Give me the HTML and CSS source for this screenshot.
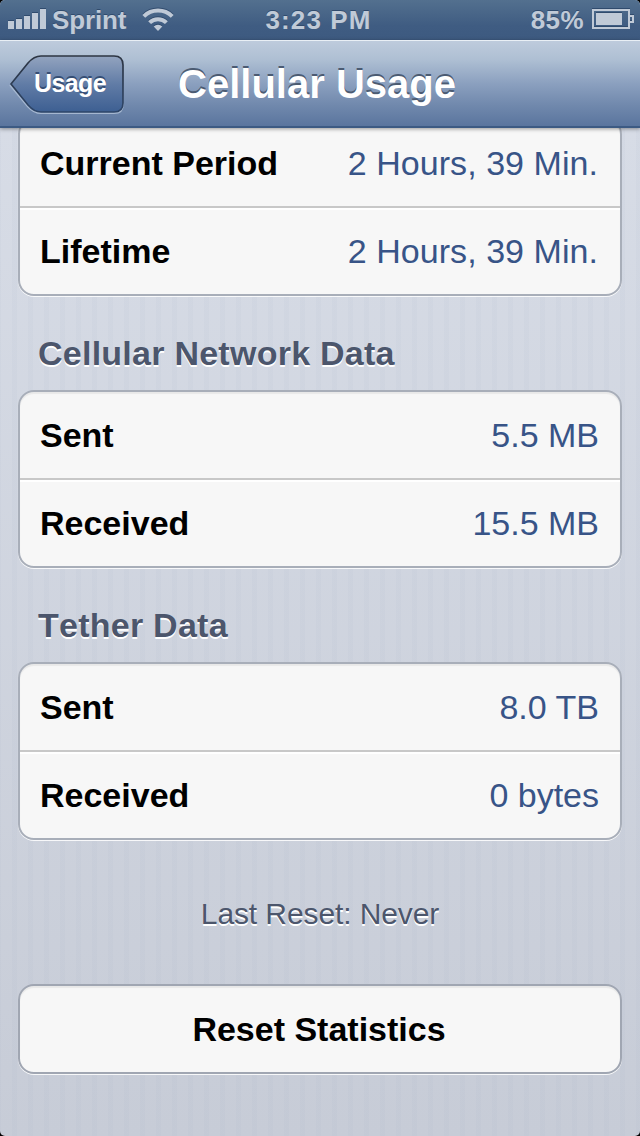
FILE: index.html
```html
<!DOCTYPE html>
<html lang="en">
<head>
<meta charset="utf-8">
<title>Cellular Usage</title>
<link rel="stylesheet" href="styles.css">
</head>
<body>
<div class="screen">
  <header class="status">
    <div class="status-left">
      <svg class="signal" width="38" height="20" viewBox="0 0 38 20"><path d="M0 12h6v8H0zM8 10h6v10H8zM16 7h6v13h-6zM24 4h6v16h-6zM32 0h6v20h-6z"/></svg>
      <span class="carrier">Sprint</span>
      <svg class="wifi" width="32" height="24" viewBox="0 0 32 24"><path d="M16 23l-4.300-4.500a6.200 6.200 0 0 1 8.600 0z"/><path class="arc" d="M7.600 14.700a11.800 11.800 0 0 1 16.800 0M1.800 8.400a20.300 20.300 0 0 1 28.400 0"/></svg>
    </div>
    <span class="time">3:23 PM</span>
    <div class="status-right">
      <span class="percent">85%</span>
      <svg class="battery" width="42" height="20" viewBox="0 0 42 20"><path class="frame" d="M1 1h36v18H1z"/><path class="frame" d="M37 7h4v6h-4"/><path d="M4 4h26v12H4z"/></svg>
    </div>
  </header>
  <nav class="nav">
    <a class="back">
      <svg class="back-shape" width="116" height="60" viewBox="0 0 116 60">
        <defs><linearGradient id="back-fill" x2="0" y2="1"><stop offset="0" stop-color="#93a4bf"/><stop offset=".5" stop-color="#617ca6"/><stop offset="1" stop-color="#3d5f92"/></linearGradient>
        <linearGradient id="back-edge" x2="0" y2="1"><stop offset="0" stop-color="#2d3542"/><stop offset="1" stop-color="#2d4568"/></linearGradient></defs>
        <path class="glow" d="M2.500 31.500L20 9.500Q26 3 33 3H106Q115 3 115 11V50Q115 59 106 59H33Q26 59 20 52.500Z"/>
        <path class="outline" d="M3 30L20 9Q26 2 33 2H106Q115 2 115 11V49Q115 58 106 58H33Q26 58 20 51Z"/>
      </svg>
      <span class="back-label">Usage</span>
    </a>
    <h1 class="title">Cellular Usage</h1>
  </nav>
  <main class="content">
    <section class="group">
      <div class="row"><span class="label">Current Period</span><span class="value duration">2 Hours, 39 Min.</span></div>
      <div class="row"><span class="label">Lifetime</span><span class="value duration">2 Hours, 39 Min.</span></div>
    </section>
    <h2 class="heading">Cellular Network Data</h2>
    <section class="group">
      <div class="row"><span class="label">Sent</span><span class="value">5.5 MB</span></div>
      <div class="row"><span class="label">Received</span><span class="value">15.5 MB</span></div>
    </section>
    <h2 class="heading">Tether Data</h2>
    <section class="group">
      <div class="row"><span class="label">Sent</span><span class="value">8.0 TB</span></div>
      <div class="row"><span class="label">Received</span><span class="value">0 bytes</span></div>
    </section>
    <p class="note">Last Reset: Never</p>
    <button class="reset">Reset Statistics</button>
  </main>
</div>
</body>
</html>
```
FILE: styles.css
```css
* { box-sizing: border-box; }
body {
  margin: 0;
  background: #000;
  font-family: "Liberation Sans", Arial, sans-serif;
}
.screen {
  display: flex;
  flex-direction: column;
  width: 640px;
  height: 1136px;
  overflow: hidden;
  border-radius: 5px;
  background:
    repeating-linear-gradient(90deg, rgba(150,165,190,.06) 0 1px, transparent 1px 12px, rgba(150,165,190,.06) 12px 16px),
    linear-gradient(#d9dee8, #c7ccd7);
}
.status {
  display: grid;
  grid-template-columns: 1fr auto 1fr;
  align-items: center;
  height: 40px;
  flex: none;
  padding: 0 6px 0 8px;
  background: linear-gradient(#53708f, #3f5c82 65%, #3d5a80);
  color: #c0cad7;
  font-size: 26px;
  font-weight: bold;
  line-height: 38px;
  text-shadow: 0 -1px 0 #304b6d;
}
.status-left, .status-right { display: flex; align-items: center; }
.status-right { justify-content: flex-end; }
.status svg { fill: #c0cad7; filter: drop-shadow(0 -1px 0 #304b6d); }
.signal { margin-top: -2px; }
.carrier { margin: 0 16px 0 6px; letter-spacing: -.15px; }
.wifi .arc { fill: none; stroke: #c0cad7; stroke-width: 4; }
.time { padding-right: 5px; letter-spacing: 1.1px; }
.percent { letter-spacing: .4px; }
.battery { margin: -2px 0 0 8px; }
.battery .frame { fill: none; stroke: #c0cad7; stroke-width: 2; }
.nav {
  display: grid;
  grid-template-columns: 116px 1fr 116px;
  align-items: center;
  height: 88px;
  flex: none;
  padding: 0 8px;
  background: linear-gradient(#becbdc, #aebfd3 22%, #8ba0bf 50%, #7189ad 75%, #5a759e);
  border-top: 1px solid #e9eff5;
  border-bottom: 2px solid #3c5a83;
  box-shadow: 0 1px 4px rgba(0,0,0,.4);
  z-index: 1;
}
.back { display: grid; align-items: center; }
.back-shape, .back-label { grid-area: 1 / 1; }
.back-shape .glow { fill: none; stroke: #a5b7d0; stroke-width: 2; }
.back-shape .outline { fill: url(#back-fill); stroke: url(#back-edge); stroke-width: 1.7; }
.back-label {
  padding: 0 0 0 26px;
  color: #fff;
  font-size: 25px;
  font-weight: bold;
  letter-spacing: -.6px;
  text-shadow: 0 -2px 0 #354e74;
}
.title {
  margin: 0;
  padding-right: 6px;
  color: #fff;
  font-size: 40px;
  line-height: 82px;
  text-align: center;
  white-space: nowrap;
  text-shadow: 0 -2px 0 #4b5b72;
}
.content { padding: 0 18px; flex: 1; min-height: 0; }
.group {
  height: 178px;
  border: 2px solid #a8aeb9;
  border-radius: 16px;
  background: #f7f7f7;
  box-shadow: 0 1px 0 rgba(255,255,255,.85), inset 0 2px 1px rgba(0,0,0,.06);
}
.group:first-child { margin-top: -10px; }
.row {
  display: flex;
  justify-content: space-between;
  height: 86px;
  padding: 0 21px 0 20px;
  font-size: 34px;
  line-height: 86px;
  white-space: nowrap;
}
.row + .row { height: 88px; border-top: 2px solid #c8c8c8; box-shadow: inset 0 2px 0 #fff; }
.label { font-weight: bold; }
.value { color: #385487; }
.duration { padding-right: 1px; letter-spacing: .05px; }
.heading {
  height: 94px;
  margin: 0;
  padding: 10px 20px 0;
  color: #4c566c;
  font-size: 34px;
  font-kerning: none;
  letter-spacing: .25px;
  line-height: 94px;
  text-shadow: 0 2px 0 #fff;
}
.note {
  height: 144px;
  margin: 0;
  padding-top: 2px;
  color: #4c566c;
  font-size: 30px;
  letter-spacing: -.1px;
  line-height: 144px;
  text-align: center;
  text-shadow: 0 2px 0 #fff;
}
.reset {
  display: block;
  width: 100%;
  height: 90px;
  padding: 0 2px 0 0;
  border: 2px solid #a0a6b2;
  border-radius: 16px;
  background: #f7f7f7;
  box-shadow: 0 1px 0 rgba(255,255,255,.85), inset 0 2px 1px rgba(0,0,0,.06);
  color: #000;
  font: bold 34px/86px "Liberation Sans", Arial, sans-serif;
}
```
